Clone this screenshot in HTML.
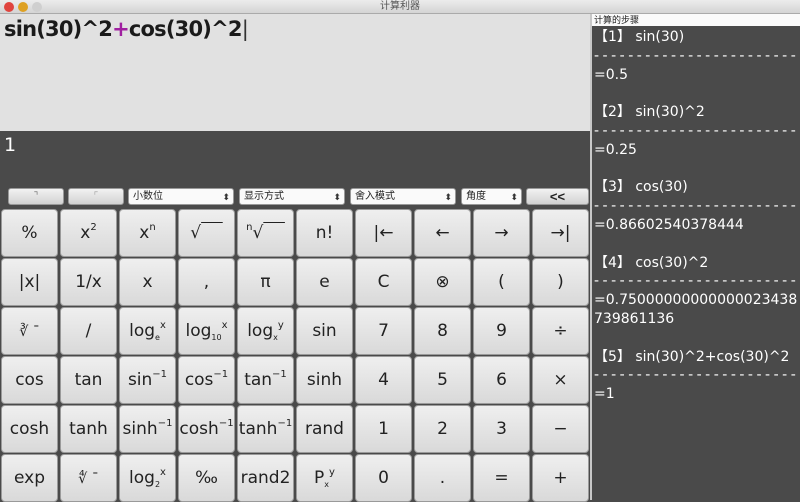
<!DOCTYPE html>
<html><head><meta charset="utf-8"><style>
*{margin:0;padding:0;box-sizing:border-box}
body{width:800px;height:500px;overflow:hidden;background:#4a4a4a;font-family:"Liberation Sans","Noto Sans CJK SC",sans-serif;position:relative}
#title{position:absolute;left:0;top:0;width:800px;height:14px;background:linear-gradient(#ececec,#d4d4d4);border-bottom:1px solid #aaa;font-size:10px;color:#555;text-align:center;line-height:14px}
.dot{position:absolute;top:2px;width:10px;height:10px;border-radius:50%}
#input{position:absolute;left:0;top:14px;width:590px;height:117px;background:#e1e1e1;font-size:21px;font-weight:bold;color:#1a1a1a;padding:3px 0 0 4px;font-family:"DejaVu Sans","Liberation Sans",sans-serif;letter-spacing:-0.8px}
#result{position:absolute;left:0;top:131px;width:590px;height:78px;background:#4a4a4a;color:#fff;font-size:19px;padding:3px 0 0 4px;font-family:"DejaVu Sans",sans-serif}
#side{position:absolute;left:590px;top:14px;width:210px;height:486px;background:#4a4a4a;border-left:2px solid #c8c8c8}
#sidehead{height:12px;background:#fafafa;font-size:9px;color:#222;line-height:12px;padding-left:2px}
#steps{color:#fff;font-size:14px;line-height:18.8px;padding:2px 0 0 2px;font-family:"DejaVu Sans",sans-serif;white-space:pre;overflow:hidden}
.d{letter-spacing:3.5px}
.tb{position:absolute;top:188px;height:17px;border-radius:3px;font-size:10px;line-height:16px}
.btn1{background:linear-gradient(#f2f2f2,#d2d2d2);border:1px solid #999;text-align:center;color:#777}
.sel{background:#fafafa;border:1px solid #999;color:#222;padding-left:4px}
.sel::after{content:"⬍";position:absolute;right:3px;font-size:9px;color:#333}
#grid{position:absolute;left:1px;top:209px;width:590px}
.k{position:absolute;width:57px;height:48px;border:1px solid #9a9a9a;border-radius:4px;background:linear-gradient(#efefef,#d9d9d9);font-size:17px;color:#222;display:flex;align-items:center;justify-content:center;font-family:"DejaVu Sans",sans-serif;white-space:nowrap}
.k sup{font-size:10px;vertical-align:8px;line-height:0}
.k sub{font-size:8px;vertical-align:-4px;line-height:0}
.ov{text-decoration:overline}
</style></head><body>
<div id="title">计算利器
<div class="dot" style="left:4px;background:#e0443e"></div>
<div class="dot" style="left:18px;background:#dea123"></div>
<div class="dot" style="left:32px;background:#cfcfcf"></div></div>
<div id="input">sin(30)^2<span style="color:#a020a0">+</span>cos(30)^2<span style="font-weight:normal;color:#333">|</span></div>
<div id="result">1</div>
<div id="side"><div id="sidehead">计算的步骤</div><div id="steps">【1】 sin(30)
<span class="d">------------------------</span>
=0.5

【2】 sin(30)^2
<span class="d">------------------------</span>
=0.25

【3】 cos(30)
<span class="d">------------------------</span>
=0.86602540378444

【4】 cos(30)^2
<span class="d">------------------------</span>
=0.75000000000000023438
739861136

【5】 sin(30)^2+cos(30)^2
<span class="d">------------------------</span>
=1</div></div>
<div class="tb btn1" style="left:8px;width:56px">⌝</div>
<div class="tb btn1" style="left:68px;width:56px;color:#aaa">⌜</div>
<div class="tb sel" style="left:128px;width:106px">小数位</div>
<div class="tb sel" style="left:239px;width:106px">显示方式</div>
<div class="tb sel" style="left:350px;width:106px">舍入模式</div>
<div class="tb sel" style="left:461px;width:61px">角度</div>
<div class="tb btn1" style="left:526px;width:63px;color:#222;font-size:13px;font-weight:bold">&lt;&lt;</div>
<div id="grid">
</div>
<script>
var rows=[
["%","x<sup>2</sup>","x<sup>n</sup>","√<span class='ov'>&nbsp;&nbsp;&nbsp;&nbsp;</span>","<sup>n</sup>√<span class='ov'>&nbsp;&nbsp;&nbsp;&nbsp;</span>","n!","|←","←","→","→|"],
["|x|","1/x","x",",","π","e","C","⊗","(",")"],
["<small>∛ ¯</small>","/","log<sub>e</sub><sup>x</sup>","log<sub>10</sub><sup>x</sup>","log<sub>x</sub><sup>y</sup>","sin","7","8","9","÷"],
["cos","tan","sin<sup>−1</sup>","cos<sup>−1</sup>","tan<sup>−1</sup>","sinh","4","5","6","×"],
["cosh","tanh","sinh<sup>−1</sup>","cosh<sup>−1</sup>","tanh<sup>−1</sup>","rand","1","2","3","−"],
["exp","<small>∜ ¯</small>","log<sub>2</sub><sup>x</sup>","‰","rand2","P<sub>x</sub><sup>y</sup>","0",".","=","+"]];
var h="";
rows.forEach(function(r,i){r.forEach(function(t,j){
h+='<div class="k" style="left:'+(j*59)+'px;top:'+(i*49)+'px"><span>'+t+'</span></div>';});});
document.getElementById("grid").innerHTML=h;
</script>
</body></html>
